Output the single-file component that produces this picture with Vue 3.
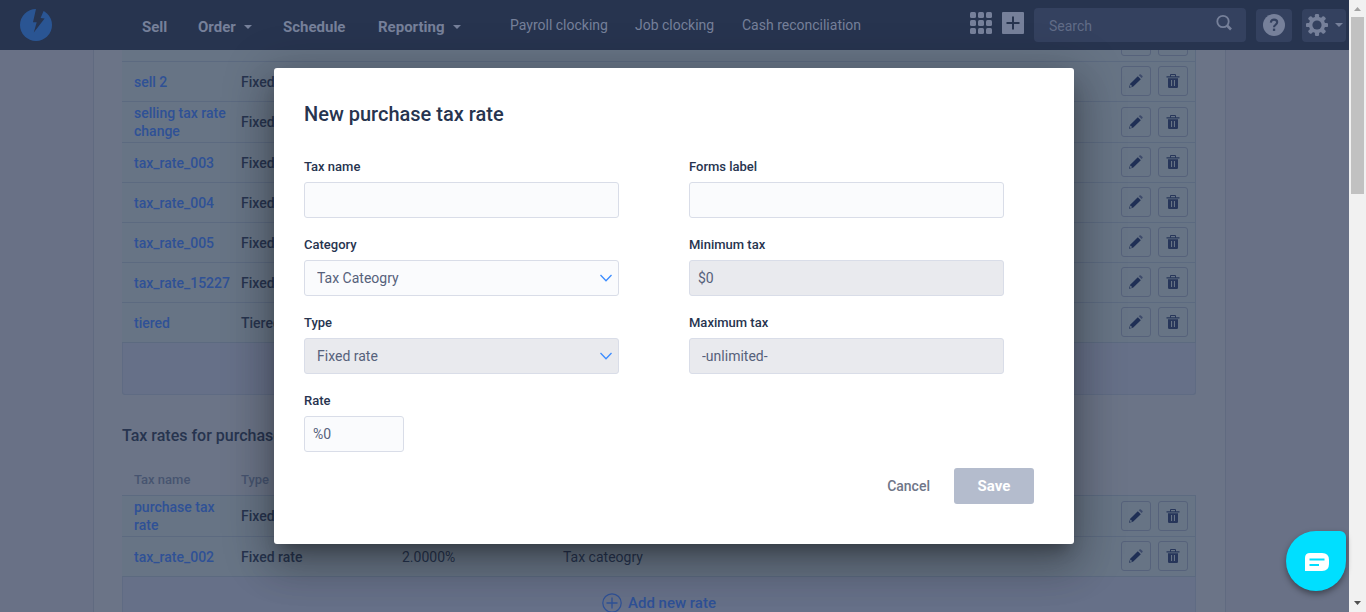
<script setup>
import { ref } from 'vue'

const primaryLinks = [
  { label: 'Sell' },
  { label: 'Order', menu: true },
  { label: 'Schedule' },
  { label: 'Reporting', menu: true },
]
const secondaryLinks = ['Payroll clocking', 'Job clocking', 'Cash reconciliation']

const sellingRates = [
  { name: '', type: '' },
  { name: 'sell 2', type: 'Fixed rate' },
  { name: 'selling tax rate change', type: 'Fixed rate' },
  { name: 'tax_rate_003', type: 'Fixed rate' },
  { name: 'tax_rate_004', type: 'Fixed rate' },
  { name: 'tax_rate_005', type: 'Fixed rate' },
  { name: 'tax_rate_15227', type: 'Fixed rate' },
  { name: 'tiered', type: 'Tiered' },
]
const purchaseRates = [
  { name: 'purchase tax rate', type: 'Fixed rate', rate: '', category: '' },
  { name: 'tax_rate_002', type: 'Fixed rate', rate: '2.0000%', category: 'Tax cateogry' },
]
const sections = [
  { id: 'selling', title: '', rates: sellingRates },
  { id: 'purchase', title: 'Tax rates for purchases', rates: purchaseRates },
]

const taxName = ref('')
const formsLabel = ref('')
const rate = ref('%0')
</script>

<template>
  <div class="shell">
    <div class="page">
      <header class="topbar">
        <a class="logo" href="#" aria-label="Home">
          <svg width="32" height="32" viewBox="0 0 32 32">
            <circle cx="16" cy="16" r="16" fill="#2a5593" />
            <path fill="#27344f" d="M16.2 -1 13 13.2H16.7L13.8 23.6 24.6 9.4 20.6 8.9 24 1V-1Z" />
          </svg>
        </a>
        <nav class="links">
          <a v-for="link in primaryLinks" :key="link.label" class="primary" href="#">
            {{ link.label }}<span v-if="link.menu" class="caret"></span>
          </a>
          <a v-for="label in secondaryLinks" :key="label" class="secondary" href="#">{{ label }}</a>
        </nav>
        <div class="tools">
          <button class="plain" aria-label="Apps">
            <svg width="22" height="22" viewBox="0 0 22 22" fill="#76809a">
              <template v-for="y in 3" :key="y">
                <rect v-for="x in 3" :key="x" :x="(x - 1) * 8" :y="(y - 1) * 8" width="6" height="6" rx="1.5" />
              </template>
            </svg>
          </button>
          <button class="plain" aria-label="Add">
            <svg width="22" height="22" viewBox="0 0 22 22">
              <rect width="22" height="22" rx="1" fill="#76809a" />
              <path d="M11 4.5v13M4.5 11h13" stroke="#27344f" stroke-width="2" />
            </svg>
          </button>
          <label class="search">
            <input type="search" placeholder="Search" aria-label="Search" />
            <svg width="18" height="18" viewBox="0 0 18 18" fill="none" stroke="#76809a">
              <circle cx="8" cy="7.5" r="5.7" stroke-width="1.8" />
              <path d="M12 11.5 16 15.5" stroke-width="2.6" />
            </svg>
          </label>
          <button class="tool" aria-label="Help">
            <svg width="22" height="22" viewBox="0 0 22 22">
              <circle cx="11" cy="11" r="11" fill="#76809a" />
              <path d="M7.8 8.6Q8 5.6 11 5.6 14.2 5.6 14.2 8.3 14.2 9.7 12.5 10.8 11 11.7 11 13.2" fill="none" stroke="#34415f" stroke-width="2.1" />
              <rect x="9.9" y="14.6" width="2.3" height="2.3" fill="#34415f" />
            </svg>
          </button>
          <button class="tool gear" aria-label="Settings">
            <svg width="22" height="22" viewBox="0 0 22 22">
              <g fill="#76809a">
                <rect v-for="n in 4" :key="n" x="8.9" y="0" width="4.2" height="22" rx="1.2" :transform="`rotate(${n * 45} 11 11)`" />
                <circle cx="11" cy="11" r="8.2" />
              </g>
              <circle cx="11" cy="11" r="4.6" fill="#34415f" />
            </svg>
            <span class="caret"></span>
          </button>
        </div>
      </header>

      <div class="viewport">
        <main class="content">
          <section v-for="section in sections" :key="section.id" class="rates">
            <h2 v-if="section.title">{{ section.title }}</h2>
            <table>
              <colgroup>
                <col class="c-name" />
                <col class="c-type" />
                <col class="c-rate" />
                <col />
                <col class="c-actions" />
              </colgroup>
              <thead v-if="section.title">
                <tr>
                  <th>Tax name</th>
                  <th>Type</th>
                  <th></th>
                  <th></th>
                  <th></th>
                </tr>
              </thead>
              <tbody>
                <tr v-for="row in section.rates" :key="row.name">
                  <td><a href="#">{{ row.name }}</a></td>
                  <td>{{ row.type }}</td>
                  <td class="light">{{ row.rate }}</td>
                  <td class="light">{{ row.category }}</td>
                  <td>
                    <div class="actions">
                      <button :aria-label="`Edit ${row.name}`">
                        <svg width="14" height="14" viewBox="0 0 14 14">
                          <path fill="#1f2f55" d="M0 13.7 1.2 9.7 8.8 2.2 11.8 5.2 4 12.7Z" />
                          <path fill="#3d4a6b" d="M9.8 1.3 10.8.3Q11.3 0 11.8.4L13.5 2.1Q13.9 2.6 13.5 3.1L12.6 4.1Z" />
                          <path fill="#677485" d="M1.4 10.4 3.4 12.3 1.4 12.9.9 12.4Z" />
                        </svg>
                      </button>
                      <button :aria-label="`Delete ${row.name}`">
                        <svg width="14" height="14" viewBox="0 0 14 14" fill="#27365a">
                          <path d="M4 2.2V1Q4 0 5 0H9Q10 0 10 1V2.2H13.5V3.6H.5V2.2ZM5 2.2H9V1H5Z" fill-rule="evenodd" />
                          <path d="M2 4.2H12V12.8Q12 14 10.8 14H3.2Q2 14 2 12.8ZM5 6V12H6.1V6ZM7.9 6V12H9V6Z" fill-rule="evenodd" />
                        </svg>
                      </button>
                    </div>
                  </td>
                </tr>
              </tbody>
            </table>
            <div class="adder">
              <button v-if="section.title">
                <svg width="20" height="20" viewBox="0 0 20 20" fill="none" stroke="#2f5196">
                  <circle cx="10" cy="10" r="9.2" stroke-width="1.2" />
                  <path d="M10 4.5v11M4.5 10h11" stroke-width="1.3" />
                </svg>
                Add new rate
              </button>
            </div>
          </section>
        </main>
      </div>

      <div class="overlay">
        <form class="dialog" role="dialog" aria-labelledby="dialog-title" @submit.prevent>
          <h1 id="dialog-title">New purchase tax rate</h1>
          <div class="fields">
            <div class="field">
              <label for="tax-name">Tax name</label>
              <input id="tax-name" v-model="taxName" type="text" />
            </div>
            <div class="field">
              <label for="forms-label">Forms label</label>
              <input id="forms-label" v-model="formsLabel" type="text" />
            </div>
            <div class="field">
              <label for="category">Category</label>
              <div class="select">
                <select id="category"><option>Tax Cateogry</option></select>
                <svg width="12" height="8" viewBox="0 0 12 8"><path d="M.5 1 6 6.8 11.5 1" /></svg>
              </div>
            </div>
            <div class="field">
              <label for="min-tax">Minimum tax</label>
              <input id="min-tax" type="text" value="$0" disabled />
            </div>
            <div class="field">
              <label for="type">Type</label>
              <div class="select">
                <select id="type" disabled><option>Fixed rate</option></select>
                <svg width="12" height="8" viewBox="0 0 12 8"><path d="M.5 1 6 6.8 11.5 1" /></svg>
              </div>
            </div>
            <div class="field">
              <label for="max-tax">Maximum tax</label>
              <input id="max-tax" class="inset" type="text" value="-unlimited-" disabled />
            </div>
            <div class="field">
              <label for="rate">Rate</label>
              <input id="rate" v-model="rate" class="short" type="text" />
            </div>
          </div>
          <div class="buttons">
            <button class="cancel" type="button">Cancel</button>
            <button class="save" type="submit" disabled>Save</button>
          </div>
        </form>
      </div>

      <button class="chat" aria-label="Open chat">
        <svg width="24" height="18" viewBox="0 0 24 18">
          <path fill="#fff" d="M5 0H17Q24 0 24 7V11Q24 18 17 18H0V5Q0 0 5 0Z" />
          <path d="M4.5 6.5H19.5M4.5 12H14" stroke="#00dfff" stroke-width="2" />
        </svg>
      </button>
    </div>

    <div class="scrollbar" aria-hidden="true">
      <svg width="17" height="17" viewBox="0 0 17 17"><path fill="#a3a3a3" d="M5 11 8.5 7 12 11Z" /></svg>
      <div class="thumb"></div>
      <svg class="down" width="17" height="17" viewBox="0 0 17 17"><path fill="#505050" d="M5 6 8.5 10 12 6Z" /></svg>
    </div>
  </div>
</template>

<style>
body {
  margin: 0;
}
</style>

<style scoped>
* {
  box-sizing: border-box;
}
.shell {
  display: flex;
  height: 100vh;
  overflow: hidden;
  font-family: Roboto, "Liberation Sans", sans-serif;
  font-size: 14px;
  color: #27344f;
}
a {
  text-decoration: none;
  color: inherit;
}
button,
input,
select {
  font: inherit;
  color: inherit;
  border: 0;
  margin: 0;
  padding: 0;
  background: none;
}
button {
  display: flex;
  align-items: center;
  justify-content: center;
}
svg {
  display: block;
  flex: none;
}
.page {
  position: relative;
  flex: 1;
  min-width: 0;
  display: flex;
  flex-direction: column;
  background: #697186;
}
.topbar {
  flex: none;
  display: flex;
  align-items: center;
  height: 50px;
  padding: 0 3px 0 20px;
  background: #27344f;
  color: #76809a;
}
.logo {
  margin-right: 90px;
}
.links {
  display: grid;
  grid-template-columns: 56px 85px 95px 132px 125px 107px auto;
  align-items: center;
  white-space: nowrap;
}
.primary {
  display: flex;
  align-items: center;
  gap: 8px;
  padding-top: 4px;
  font-size: 15px;
  font-weight: 700;
}
.secondary {
  font-size: 14px;
}
.caret {
  border: 4px solid transparent;
  border-top-color: currentColor;
  border-bottom: 0;
}
.tools {
  display: flex;
  align-items: center;
  gap: 10px;
  margin-left: auto;
}
.plain {
  padding-bottom: 4px;
}
.search {
  display: flex;
  align-items: center;
  width: 212px;
  height: 34px;
  padding: 0 13px 0 15px;
  border-radius: 4px;
  background: #34415f;
}
.search input {
  flex: 1;
  min-width: 0;
  outline: 0;
  padding-top: 2px;
  font-size: 14px;
}
.search input::placeholder {
  color: #616c87;
  opacity: 1;
}
.search svg {
  margin-bottom: 4px;
}
.tool {
  width: 36px;
  height: 33px;
  border-radius: 4px;
  background: #34415f;
}
.gear {
  width: 44px;
  gap: 7px;
}
.viewport {
  flex: 1;
  min-height: 0;
  overflow: hidden;
}
.content {
  margin: -28px 123px 0 93px;
  padding: 0 29px 0 28px;
  border: solid #606a80;
  border-width: 0 1px;
  background: #6b7487;
}
h2 {
  margin: 0;
  padding: 31px 0 24px;
  font-size: 16px;
  line-height: 20px;
  font-weight: 500;
}
table {
  width: 100%;
  table-layout: fixed;
  border-collapse: separate;
  border-spacing: 0;
  background: #677485;
}
.c-name {
  width: 107px;
}
.c-type,
.c-rate {
  width: 161px;
}
.c-actions {
  width: 96px;
}
thead {
  background: #6b7487;
}
th {
  height: 25px;
  padding: 0 0 5px 12px;
  border-bottom: 1px solid #5c6a80;
  text-align: left;
  vertical-align: middle;
  font-size: 13px;
  font-weight: 500;
  line-height: 20px;
  color: #475470;
}
td {
  height: 40px;
  padding: 2px 0 2px 12px;
  border-bottom: 1px solid #5c6a80;
  font-size: 14px;
  font-weight: 500;
  line-height: 18px;
}
td:last-child {
  padding: 1px 7px 2px 0;
  border-right: 1px solid #5c6a80;
}
td a {
  color: #2f5196;
}
.light {
  font-weight: 400;
}
.actions {
  display: flex;
  justify-content: flex-end;
  gap: 7px;
}
.actions button {
  width: 30px;
  height: 30px;
  border: 1px solid #56627b;
  border-radius: 3px;
}
.adder {
  display: flex;
  align-items: center;
  justify-content: center;
  height: 52px;
  border: 1px solid #5f6b83;
  border-top: 0;
  border-radius: 0 0 3px 3px;
  background: #667088;
}
.adder button {
  gap: 6px;
  font-size: 15px;
  font-weight: 500;
  color: #2f5196;
}
.overlay {
  position: absolute;
  inset: 0;
  display: flex;
  justify-content: center;
  align-items: flex-start;
  padding: 68px 1px 0 0;
}
.dialog {
  width: 800px;
  max-width: 100%;
  padding: 34px 40px 40px 30px;
  border-radius: 3px;
  background: #fff;
  box-shadow:
    0 11px 15px -7px rgba(0, 0, 0, 0.3),
    0 24px 38px 3px rgba(0, 0, 0, 0.14),
    0 9px 46px 8px rgba(0, 0, 0, 0.22);
}
h1 {
  margin: 0 0 32px;
  font-size: 20px;
  line-height: 24px;
  font-weight: 500;
}
.fields {
  display: grid;
  grid-template-columns: 1fr 1fr;
  column-gap: 70px;
  row-gap: 18px;
  padding-right: 30px;
}
.field label {
  display: block;
  padding-bottom: 6px;
  font-size: 13px;
  line-height: 18px;
  font-weight: 500;
}
.field input,
.field select {
  display: block;
  width: 100%;
  height: 36px;
  padding: 0 8px;
  border: 1px solid #d9dde8;
  border-radius: 3px;
  background: #fafbfd;
  font-size: 14px;
  color: #56617b;
  opacity: 1;
  appearance: none;
}
.field select,
.field .inset {
  padding: 0 12px;
}
.field .short {
  width: 100px;
}
.field :disabled {
  background: #e9eaee;
}
.select {
  position: relative;
}
.select svg {
  position: absolute;
  right: 7px;
  top: 14px;
  fill: none;
  stroke: #3b8cff;
  stroke-width: 1.3;
}
.buttons {
  display: flex;
  justify-content: flex-end;
  gap: 24px;
  margin-top: 16px;
}
.cancel {
  color: #6f7688;
  font-weight: 500;
}
.save {
  width: 80px;
  height: 36px;
  border-radius: 3px;
  background: #b4bccd;
  color: #fff;
  font-size: 15px;
  font-weight: 700;
}
.chat {
  position: absolute;
  right: 3px;
  bottom: 21px;
  width: 60px;
  height: 60px;
  padding: 2px 0 0 2px;
  border-radius: 30px 6px 30px 30px;
  background: #00dfff;
  box-shadow: 0 3px 6px rgba(0, 0, 0, 0.4);
}
.scrollbar {
  flex: none;
  display: flex;
  flex-direction: column;
  width: 17px;
  background: #f1f1f1;
}
.thumb {
  height: 177px;
  margin: 0 2px;
  background: #c1c1c1;
}
.down {
  margin-top: auto;
}
</style>
